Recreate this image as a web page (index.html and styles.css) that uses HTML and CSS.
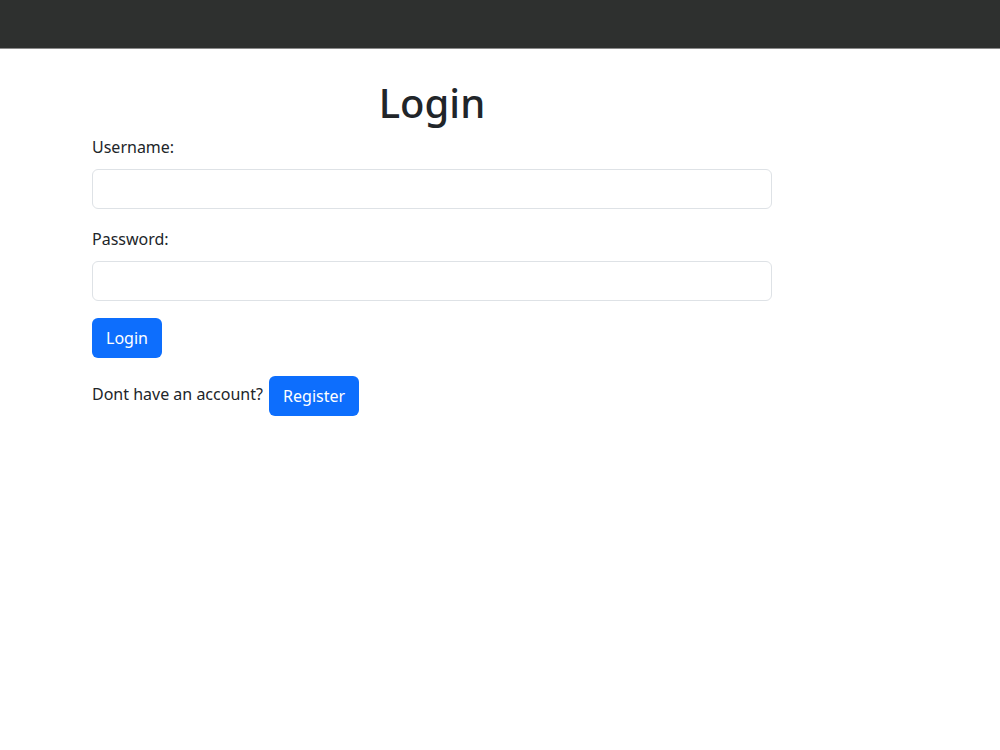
FILE: index.html
```html
<!DOCTYPE html>
<html lang="en">
<head>
  <meta charset="UTF-8">
  <meta name="viewport" content="width=device-width, initial-scale=1.0">
  <title>Login</title>
  <link rel="stylesheet" href="styles.css">
</head>
<body>
  <nav class="navbar"></nav>

  <div class="container">
    <h1>Login</h1>
    <form class="login-form">
      <div class="field">
        <label for="username">Username:</label>
        <input type="text" id="username" class="form-control">
      </div>
      <div class="field">
        <label for="password">Password:</label>
        <input type="password" id="password" class="form-control">
      </div>
      <button type="submit" class="btn">Login</button>
    </form>
    <p class="register">Dont have an account? <a href="#" class="btn">Register</a></p>
  </div>
</body>
</html>
```

FILE: styles.css
```css
body {
  margin: 0;
  font-family: 'Noto Sans', 'Open Sans', sans-serif;
  font-size: 16px;
  line-height: 1.5;
  color: #212529;
  background: #fff;
}

.navbar {
  height: 48px;
  background: #2e302f;
  border-bottom: 1px solid #8a8a8a;
}

.container {
  width: 680px;
  margin-left: 92px;
}

h1 {
  margin: 30px 0 8px;
  text-align: center;
  font-size: 40px;
  font-weight: 500;
  line-height: 48px;
}

.field {
  margin-bottom: 18px;
}

.field:last-of-type {
  margin-bottom: 17px;
}

label {
  display: block;
  margin-bottom: 10px;
}

.form-control {
  display: block;
  box-sizing: border-box;
  width: 100%;
  height: 40px;
  padding: 6px 12px;
  font: inherit;
  border: 1px solid #dee2e6;
  border-radius: 6px;
}

.btn {
  display: inline-block;
  height: 40px;
  padding: 0 14px;
  font: inherit;
  line-height: 40px;
  color: #fff;
  background: #0d6efd;
  border: none;
  border-radius: 6px;
  text-decoration: none;
  cursor: pointer;
  vertical-align: middle;
}

.login-form .btn {
  display: block;
}

.register {
  margin: 18px 0 0;
}

.register .btn {
  margin-left: 2px;
}
```
